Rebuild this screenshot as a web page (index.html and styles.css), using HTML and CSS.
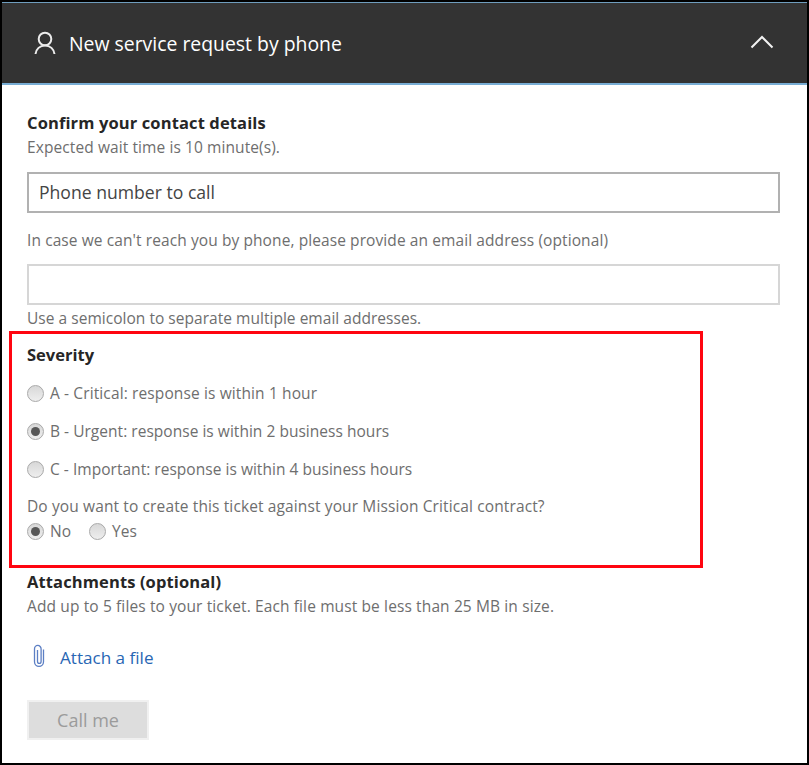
FILE: index.html
```html
<!DOCTYPE html>
<html lang="en">
<head>
<meta charset="utf-8">
<title>New service request by phone</title>
<link rel="stylesheet" href="styles.css">
</head>
<body>
<main class="panel">
  <header class="panel-header">
    <svg class="person" width="22" height="24" viewBox="0 0 22 24"><circle cx="11" cy="8" r="6.300"/><path d="M1.500 23c.5-5 4.400-8.500 9.500-8.500s9 3.500 9.500 8.500"/></svg>
    <h1 class="title">New service request by phone</h1>
    <svg class="chevron" width="24" height="14" viewBox="0 0 24 14"><path d="M1.500 12.500 12 2l10.500 10.500"/></svg>
  </header>
  <form class="form">
    <section class="contact">
      <h2 class="heading wide">Confirm your contact details</h2>
      <p class="text">Expected wait time is 10 minute(s).</p>
      <div class="field field-phone">Phone number to call</div>
      <p class="text email-label">In case we can't reach you by phone, please provide an email address (optional)</p>
      <div class="field field-email"></div>
      <p class="text hint">Use a semicolon to separate multiple email addresses.</p>
    </section>
    <section class="severity">
      <h2 class="heading">Severity</h2>
      <label class="option loose"><i class="radio"></i><span>A - Critical: response is within 1 hour</span></label>
      <label class="option"><i class="radio on"></i><span>B - Urgent: response is within 2 business hours</span></label>
      <label class="option"><i class="radio"></i><span>C - Important: response is within 4 business hours</span></label>
      <p class="text question loose">Do you want to create this ticket against your Mission Critical contract?</p>
      <div class="answers">
        <label class="option"><i class="radio on"></i><span>No</span></label>
        <label class="option"><i class="radio"></i><span>Yes</span></label>
      </div>
    </section>
    <section class="attachments">
      <h2 class="heading wide">Attachments (optional)</h2>
      <p class="text loose">Add up to 5 files to your ticket. Each file must be less than 25 MB in size.</p>
      <a class="attach"><svg class="clip" width="12" height="24" viewBox="0 0 12 24"><path d="M10.500 5.500v12.200a4.500 4.700 0 0 1-9 0V5a3.300 3.600 0 0 1 6.600 0v12.200a1.800 2.200 0 0 1-3.600 0V6"/></svg><span>Attach a file</span></a>
      <button class="call" type="button" disabled>Call me</button>
    </section>
  </form>
</main>
</body>
</html>
```
FILE: styles.css
```css
* { box-sizing: border-box; }
body { margin: 0; font-family: "Open Sans", "Noto Sans", sans-serif; font-size: 15.5px; color: #6e6e6e; }
h1, h2, p { margin: 0; font-weight: 400; white-space: nowrap; }
.panel { width: 809px; height: 765px; border: 2px solid #000; background: #fff; overflow: hidden; }
.panel-header { height: 83px; display: flex; align-items: center; padding: 0 33px 0 32px; background: #333; border-top: 1px solid #6f9dbd; border-bottom: 2px solid #78add4; color: #fff; }
.person { fill: none; stroke: #ececec; stroke-width: 2; }
.title { font-size: 19.4px; line-height: 26px; margin: 2px 0 0 13px; }
.chevron { margin: -3px 0 0 auto; fill: none; stroke: #f2f2f2; stroke-width: 2; }
.heading { font-size: 16.5px; line-height: 24px; font-weight: 700; color: #262626; }
.heading.wide { letter-spacing: .12px; }
.text { line-height: 24px; letter-spacing: .09px; }
.text.loose, .option.loose { letter-spacing: .12px; }
.contact { padding: 26px 27px 0 25px; }
.field { height: 41px; border: 2px solid #b1b1b1; background: #fff; }
.field-phone { margin-top: 13px; padding-left: 10px; font-size: 17.6px; line-height: 37px; color: #444; }
.email-label { margin-top: 15px; }
.field-email { margin-top: 12px; border-color: #d6d6d6; }
.hint { margin-top: 1px; letter-spacing: .03px; }
.severity { width: 694px; height: 237px; margin: 1px 0 0 7px; padding: 9px 0 0 15px; border: 3px solid #ff0510; }
.option { display: flex; align-items: center; height: 24px; gap: 6px; white-space: nowrap; letter-spacing: .03px; }
.severity > .option { margin-top: 14px; }
.radio { width: 17px; height: 17px; border-radius: 50%; border: 1px solid #a9a9a9; background: linear-gradient(#d8d8d8, #eee); display: flex; align-items: center; justify-content: center; }
.radio.on::after { content: ""; width: 9px; height: 9px; border-radius: 50%; background: #575757; }
.question { margin-top: 13px; }
.answers { display: flex; gap: 18px; margin-top: 1px; }
.attachments { padding: 2px 25px; }
.attach { display: flex; align-items: center; height: 26px; margin-top: 26px; padding-left: 6px; gap: 15px; font-size: 17.1px; color: #2866b4; }
.clip { margin-top: -3px; fill: none; stroke: #5c7fc4; stroke-width: 1.3; }
.call { display: block; width: 122px; height: 40px; margin-top: 30px; padding: 0; border: 2px solid #f0f0f0; background: #ddd; color: #9b9b9b; font: 18px "Open Sans", sans-serif; }
```
